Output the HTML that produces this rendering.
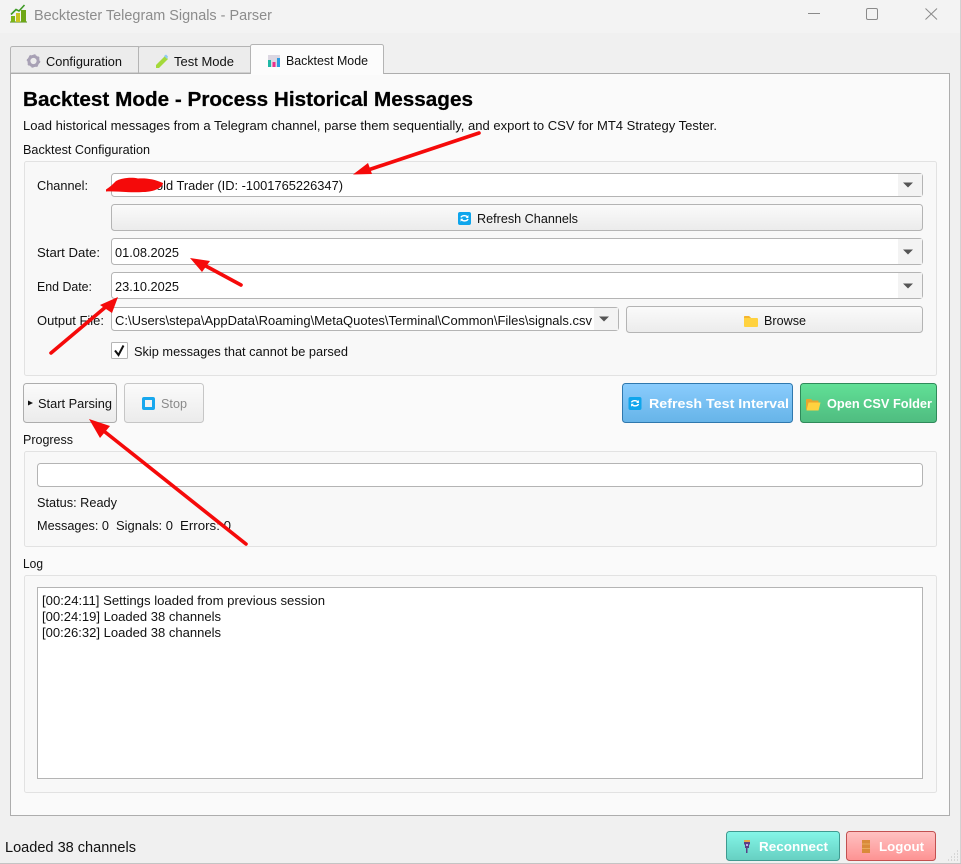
<!DOCTYPE html>
<html lang="en">
<head>
<meta charset="utf-8">
<title>Becktester Telegram Signals - Parser</title>
<style>
html,body{margin:0;padding:0;width:961px;height:864px;overflow:hidden;background:#f0f0f0}
svg{display:block}
text{font-family:"Liberation Sans",Arial,sans-serif;font-size:12.5px;fill:#111}
.w{font-weight:bold;fill:#fff;font-size:13px}
</style>
</head>
<body>
<svg xmlns="http://www.w3.org/2000/svg" width="961" height="864" viewBox="0 0 961 864">
<defs>
<linearGradient id="btn" x1="0" y1="0" x2="0" y2="1"><stop offset="0" stop-color="#fbfbfb"/><stop offset="1" stop-color="#ebebeb"/></linearGradient>
<linearGradient id="blue" x1="0" y1="0" x2="0" y2="1"><stop offset="0" stop-color="#8accfd"/><stop offset="1" stop-color="#66b4e8"/></linearGradient>
<linearGradient id="green" x1="0" y1="0" x2="0" y2="1"><stop offset="0" stop-color="#61e096"/><stop offset="1" stop-color="#4fbc80"/></linearGradient>
<linearGradient id="teal" x1="0" y1="0" x2="0" y2="1"><stop offset="0" stop-color="#84f6e8"/><stop offset="1" stop-color="#66cfc1"/></linearGradient>
<linearGradient id="red" x1="0" y1="0" x2="0" y2="1"><stop offset="0" stop-color="#ffc2c2"/><stop offset="1" stop-color="#fd9292"/></linearGradient>
<g id="refresh"><rect width="13" height="13" rx="2" fill="#0ea5ec"/><path d="M3 5.4C3.6 3.6 7.8 2.9 9.4 4.8M10 6.9C9.4 9 5.2 9.6 3.6 7.8" fill="none" stroke="#fff" stroke-width="1.4"/><path d="M10.4 3v3H7.6zM2.6 9.8v-3h2.8z" fill="#fff"/></g>
<g id="folder"><path d="M0 2a1 1 0 0 1 1-1h4l2 2h6a1 1 0 0 1 1 1v7a1 1 0 0 1-1 1H1a1 1 0 0 1-1-1z" fill="#ffd23f"/><path d="M0 2a1 1 0 0 1 1-1h4l2 2H0z" fill="#f5b52e"/></g>
</defs>

<!-- window -->
<rect width="961" height="864" fill="#f0f0f0"/>
<rect width="961" height="33" fill="#f3f3f3"/>
<rect x="960" width="1" height="864" fill="#d2d2d2"/>
<rect y="863" width="961" height="1" fill="#c4c4c4"/>

<!-- app icon -->
<path d="M10 22.5h17v-1H10z" fill="#4f8f12"/>
<rect x="11" y="16" width="4" height="6" fill="#7cb518"/>
<rect x="16" y="13" width="4" height="9" fill="#c9c422"/>
<rect x="21" y="10" width="5" height="12" fill="#6ea716"/>
<path d="M11 14.5L16 9.5L19 11L24.5 5" fill="none" stroke="#3f9a26" stroke-width="1.6"/>
<text x="34" y="20" textLength="238" lengthAdjust="spacingAndGlyphs" style="font-size:14.5px;fill:#8c8c8c">Becktester Telegram Signals - Parser</text>

<!-- window controls -->
<rect x="808" y="13" width="12" height="1" fill="#8a8a8a"/>
<rect x="866.5" y="8.5" width="11" height="11" rx="1.5" fill="none" stroke="#8a8a8a"/>
<path d="M925.5 8.5L937 19.5M937 8.5L925.5 19.5" stroke="#8a8a8a" stroke-width="1" fill="none"/>

<!-- tabs -->
<path d="M10.5 73V48.5a2 2 0 0 1 2-2H138.5V73z" fill="#ececec" stroke="#b4b4b4"/>
<path d="M138.5 73V48.5a2 2 0 0 1 2-2H250.5V73z" fill="#ececec" stroke="#b4b4b4"/>
<!-- pane -->
<rect x="10.5" y="73.5" width="939" height="742" fill="#fafafa" stroke="#adadad"/>
<path d="M250.5 74V46.5a2 2 0 0 1 2-2H381.5a2 2 0 0 1 2 2V74" fill="#fcfcfc" stroke="#b4b4b4"/>
<rect x="251" y="73" width="132" height="2" fill="#fcfcfc"/>

<!-- tab icons + labels -->
<circle cx="33.5" cy="61" r="4.6" fill="none" stroke="#a8a1b5" stroke-width="3"/>
<circle cx="33.5" cy="61" r="6" fill="none" stroke="#a8a1b5" stroke-width="1.6" stroke-dasharray="2 2.7"/>
<text x="46" y="66" textLength="76" lengthAdjust="spacingAndGlyphs">Configuration</text>
<path d="M156 65l9-9 3 3-9 9-3 0z" fill="#a4d93a"/>
<path d="M164 56l2-1.500 2 2-1 2.500z" fill="#8ec9f2"/>
<text x="174" y="66" textLength="60" lengthAdjust="spacingAndGlyphs">Test Mode</text>
<rect x="268" y="55" width="12" height="12" fill="#dcd7e2"/>
<rect x="268" y="60" width="3" height="7" fill="#20b8a6"/>
<rect x="272.500" y="62" width="3" height="5" fill="#ec2f8c"/>
<rect x="277" y="58" width="3" height="9" fill="#2c9be0"/>
<text x="286" y="65" textLength="82" lengthAdjust="spacingAndGlyphs">Backtest Mode</text>

<!-- heading -->
<text x="23" y="106" textLength="450" lengthAdjust="spacingAndGlyphs" style="font-size:20px;font-weight:bold;fill:#000;stroke:#000;stroke-width:.25px">Backtest Mode - Process Historical Messages</text>
<text x="23" y="130" textLength="694" lengthAdjust="spacingAndGlyphs">Load historical messages from a Telegram channel, parse them sequentially, and export to CSV for MT4 Strategy Tester.</text>

<!-- config group -->
<text x="23" y="154" textLength="127" lengthAdjust="spacingAndGlyphs">Backtest Configuration</text>
<rect x="24.500" y="161.500" width="912" height="214" rx="2" fill="#f8f8f8" stroke="#e2e2e2"/>

<text x="37" y="190" textLength="51" lengthAdjust="spacingAndGlyphs">Channel:</text>
<rect x="111.500" y="173.500" width="811" height="23" rx="3" fill="#fff" stroke="#b4b4b4"/>
<rect x="898" y="174" width="24" height="22" fill="#f3f3f3"/>
<path d="M903 182.500h10l-5 5z" fill="#555"/>
<text x="146" y="190" textLength="197" lengthAdjust="spacingAndGlyphs">Gold Trader (ID: -1001765226347)</text>

<rect x="111.500" y="204.500" width="811" height="26" rx="3" fill="url(#btn)" stroke="#b4b4b4"/>
<use href="#refresh" x="458" y="212"/>
<text x="477" y="223" textLength="101" lengthAdjust="spacingAndGlyphs">Refresh Channels</text>

<text x="37" y="257" textLength="63" lengthAdjust="spacingAndGlyphs">Start Date:</text>
<rect x="111.500" y="238.500" width="811" height="26" rx="3" fill="#fff" stroke="#b4b4b4"/>
<rect x="898" y="239" width="24" height="25" fill="#f3f3f3"/>
<path d="M903 249.500h10l-5 5z" fill="#555"/>
<text x="115" y="257" textLength="64" lengthAdjust="spacingAndGlyphs">01.08.2025</text>

<text x="37" y="291" textLength="55" lengthAdjust="spacingAndGlyphs">End Date:</text>
<rect x="111.500" y="272.500" width="811" height="26" rx="3" fill="#fff" stroke="#b4b4b4"/>
<rect x="898" y="273" width="24" height="25" fill="#f3f3f3"/>
<path d="M903 283.500h10l-5 5z" fill="#555"/>
<text x="115" y="291" textLength="64" lengthAdjust="spacingAndGlyphs">23.10.2025</text>

<text x="37" y="325" textLength="67" lengthAdjust="spacingAndGlyphs">Output File:</text>
<rect x="111.500" y="307.500" width="507" height="23" rx="3" fill="#fff" stroke="#b4b4b4"/>
<rect x="594" y="308" width="24" height="22" fill="#f3f3f3"/>
<path d="M599 316.500h10l-5 5z" fill="#555"/>
<text x="115" y="325" textLength="477" lengthAdjust="spacingAndGlyphs">C:\Users\stepa\AppData\Roaming\MetaQuotes\Terminal\Common\Files\signals.csv</text>

<rect x="626.500" y="306.500" width="296" height="26" rx="3" fill="url(#btn)" stroke="#b4b4b4"/>
<use href="#folder" x="744" y="315"/>
<text x="764" y="325" textLength="42" lengthAdjust="spacingAndGlyphs">Browse</text>

<rect x="111.500" y="342.500" width="16" height="16" rx="1" fill="#fff" stroke="#b4b4b4"/>
<path d="M115 350.500L118.500 355L123.500 345.500" fill="none" stroke="#111" stroke-width="2"/>
<text x="134" y="356" textLength="214" lengthAdjust="spacingAndGlyphs">Skip messages that cannot be parsed</text>

<!-- action buttons -->
<rect x="23.500" y="383.500" width="93" height="39" rx="3" fill="url(#btn)" stroke="#adadad"/>
<path d="M28 400.500l5 2.500-5 2.500z" fill="#111"/>
<text x="38" y="408" textLength="74" lengthAdjust="spacingAndGlyphs">Start Parsing</text>

<rect x="124.500" y="383.500" width="79" height="39" rx="3" fill="url(#btn)" stroke="#c6c6c6"/>
<rect x="142" y="397" width="13" height="13" rx="2" fill="#18a8ee"/>
<rect x="145" y="400" width="7" height="7" fill="#f3f3f3"/>
<text x="161" y="408" textLength="26" lengthAdjust="spacingAndGlyphs" style="fill:#8a8a8a">Stop</text>

<rect x="622.500" y="383.500" width="170" height="39" rx="3" fill="url(#blue)" stroke="#2f78ae"/>
<use href="#refresh" x="628.500" y="397"/>
<text class="w" x="649" y="408" textLength="140" lengthAdjust="spacingAndGlyphs">Refresh Test Interval</text>

<rect x="800.500" y="383.500" width="136" height="39" rx="3" fill="url(#green)" stroke="#2f8a5a"/>
<path d="M806 400a1 1 0 0 1 1-1h4l1.500 1.500h6v2h-10l-1.500 7h-1z" fill="#e8a62d"/><path d="M808.500 402.500h12l-2 8h-12z" fill="#ffd23f"/>
<text class="w" x="827" y="408" textLength="105" lengthAdjust="spacingAndGlyphs">Open CSV Folder</text>

<!-- progress -->
<text x="23" y="444" textLength="50" lengthAdjust="spacingAndGlyphs">Progress</text>
<rect x="24.500" y="451.500" width="912" height="95" rx="2" fill="#f8f8f8" stroke="#e2e2e2"/>
<rect x="37.500" y="463.500" width="885" height="23" rx="3" fill="#fff" stroke="#b4b4b4"/>
<text x="37" y="507" textLength="80" lengthAdjust="spacingAndGlyphs">Status: Ready</text>
<text x="37" y="530" textLength="72" lengthAdjust="spacingAndGlyphs">Messages: 0</text>
<text x="116" y="530" textLength="57" lengthAdjust="spacingAndGlyphs">Signals: 0</text>
<text x="180" y="530" textLength="51" lengthAdjust="spacingAndGlyphs">Errors: 0</text>

<!-- log -->
<text x="23" y="568" textLength="20" lengthAdjust="spacingAndGlyphs">Log</text>
<rect x="24.500" y="575.500" width="912" height="217" rx="2" fill="#f8f8f8" stroke="#e2e2e2"/>
<rect x="37.500" y="587.500" width="885" height="191" fill="#fff" stroke="#b4b4b4"/>
<text x="42" y="605" textLength="283" lengthAdjust="spacingAndGlyphs">[00:24:11] Settings loaded from previous session</text>
<text x="42" y="621" textLength="179" lengthAdjust="spacingAndGlyphs">[00:24:19] Loaded 38 channels</text>
<text x="42" y="637" textLength="179" lengthAdjust="spacingAndGlyphs">[00:26:32] Loaded 38 channels</text>

<!-- status bar -->
<text x="5" y="852" textLength="131" lengthAdjust="spacingAndGlyphs" style="font-size:14.500px">Loaded 38 channels</text>
<rect x="726.500" y="831.500" width="113" height="29" rx="3" fill="url(#teal)" stroke="#3f9a90"/>
<path d="M744 840h6v4l-1 1v3h-1.500v5h-1.500v-5h-1v-3l-1-1z" fill="#5a3f86"/>
<rect x="744" y="840" width="6" height="2" fill="#e3a84a"/>
<rect x="746" y="844" width="2" height="2" fill="#c9a7e8"/>
<text class="w" x="759" y="851" textLength="69" lengthAdjust="spacingAndGlyphs">Reconnect</text>
<rect x="846.500" y="831.500" width="89" height="29" rx="3" fill="url(#red)" stroke="#c25050"/>
<rect x="862" y="840" width="8" height="13" fill="#d98a3a"/>
<path d="M862 844h8M862 848.500h8" stroke="#e8aa5c" stroke-width="1"/>
<text class="w" x="879" y="851" textLength="45" lengthAdjust="spacingAndGlyphs">Logout</text>
<path d="M957 851h1M954 854h1M957 854h1M951 857h1M954 857h1M957 857h1M948 860h1M951 860h1M954 860h1M957 860h1" stroke="#bdbdbd" stroke-width="1"/>

<!-- annotations -->
<path d="M106 189.500C110 187 113 184 116 181C122 178 131 177 138 178.500C146 178 154 179 163 183C163 187 155 192 143 192C131 193 117 191 106 191.500z" fill="#f50a0a"/>
<g stroke="#f50a0a" stroke-width="3.600" stroke-linecap="round" fill="none">
<path d="M479 133L365 171"/>
<path d="M241 285L204 265"/>
<path d="M51 353L108 305"/>
<path d="M246 544L100 428"/>
</g>
<g fill="#f50a0a">
<path d="M353 174.500L368 163L372 174z"/>
<path d="M190 258L210 261L202 272z"/>
<path d="M118 297L100 305L112 313z"/>
<path d="M89 419L110 426L100 438z"/>
</g>
</svg>
</body>
</html>
